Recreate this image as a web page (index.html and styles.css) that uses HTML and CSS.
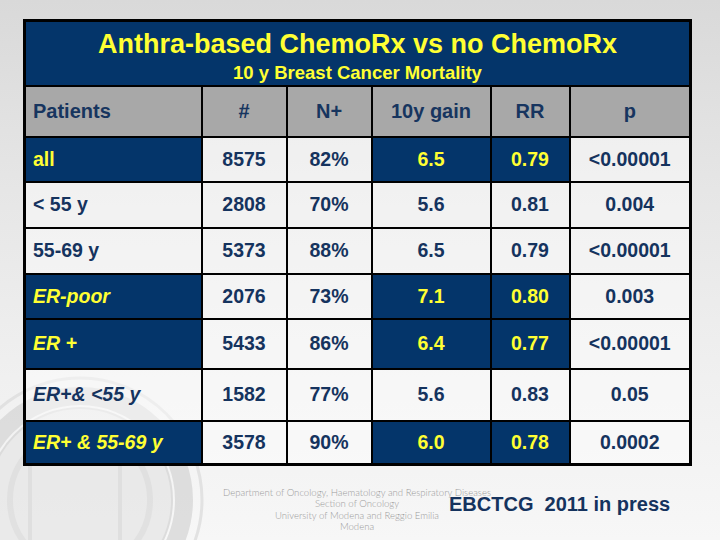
FILE: index.html
```html
<!DOCTYPE html>
<html>
<head>
<meta charset="utf-8">
<link rel="stylesheet" href="styles.css">
</head>
<body>
<div class="slide">
  <svg class="seal" width="260" height="260" viewBox="0 0 260 260" aria-hidden="true">
    <circle cx="130" cy="130" r="122" fill="none" stroke="#dcdcdc" stroke-width="3"/>
    <circle cx="130" cy="130" r="104" fill="none" stroke="#d6d6d6" stroke-width="18"/>
    <circle cx="130" cy="130" r="92" fill="#e6e6e6" stroke="#d4d4d4" stroke-width="2"/>
    <circle cx="130" cy="130" r="70" fill="none" stroke="#dadada" stroke-width="6"/>
    <rect x="80" y="70" width="90" height="110" fill="none" stroke="#d8d8d8" stroke-width="4"/>
  </svg>

  <table class="results">
    <colgroup>
      <col class="c-pat"><col class="c-n"><col class="c-np"><col class="c-gain"><col class="c-rr"><col class="c-p">
    </colgroup>
    <tr class="r-title">
      <td colspan="6" class="title-cell">
        <div class="title">Anthra-based ChemoRx vs no ChemoRx</div>
        <div class="subtitle">10 y Breast Cancer Mortality</div>
      </td>
    </tr>
    <tr class="r-head">
      <th class="lbl">Patients</th><th>#</th><th>N+</th><th>10y gain</th><th>RR</th><th>p</th>
    </tr>
    <tr class="r1">
      <td class="lbl hl">all</td><td>8575</td><td>82%</td><td class="hl">6.5</td><td class="hl">0.79</td><td>&lt;0.00001</td>
    </tr>
    <tr class="r2">
      <td class="lbl">&lt; 55 y</td><td>2808</td><td>70%</td><td>5.6</td><td>0.81</td><td>0.004</td>
    </tr>
    <tr class="r3">
      <td class="lbl">55-69 y</td><td>5373</td><td>88%</td><td>6.5</td><td>0.79</td><td>&lt;0.00001</td>
    </tr>
    <tr class="r4">
      <td class="lbl hl it">ER-poor</td><td>2076</td><td>73%</td><td class="hl">7.1</td><td class="hl">0.80</td><td>0.003</td>
    </tr>
    <tr class="r5">
      <td class="lbl hl it">ER +</td><td>5433</td><td>86%</td><td class="hl">6.4</td><td class="hl">0.77</td><td>&lt;0.00001</td>
    </tr>
    <tr class="r6">
      <td class="lbl it">ER+&amp; &lt;55 y</td><td>1582</td><td>77%</td><td>5.6</td><td>0.83</td><td>0.05</td>
    </tr>
    <tr class="r7">
      <td class="lbl hl it">ER+ &amp; 55-69 y</td><td>3578</td><td>90%</td><td class="hl">6.0</td><td class="hl">0.78</td><td>0.0002</td>
    </tr>
  </table>

  <div class="footer">
    <div class="dept">
      <div>Department of Oncology, Haematology and Respiratory Diseases</div>
      <div>Section of Oncology</div>
      <div>University of Modena and Reggio Emilia</div>
      <div>Modena</div>
    </div>
    <div class="source">EBCTCG&nbsp; 2011 in press</div>
  </div>
</div>
</body>
</html>
```

FILE: styles.css
```css
html, body {
  margin: 0;
  padding: 0;
}

body {
  width: 720px;
  height: 540px;
  overflow: hidden;
  font-family: "Liberation Sans", Arial, sans-serif;
}

.slide {
  position: relative;
  width: 720px;
  height: 540px;
  box-sizing: border-box;
  padding: 19px 0 0 23px;
  background: linear-gradient(to bottom, #d9d9d9 0%, #e6e6e6 35%, #f0f0f0 70%, #f7f7f7 100%);
  overflow: hidden;
}

.seal {
  position: absolute;
  left: -50px;
  top: 370px;
  opacity: 0.75;
}

.results {
  position: relative;
  width: 666px;
  table-layout: fixed;
  border-collapse: collapse;
  border: 3px solid #000;
  font-weight: bold;
  font-size: 19.5px;
  color: #15335e;
}

.c-pat { width: 177px; }
.c-n { width: 85px; }
.c-np { width: 85px; }
.c-gain { width: 119px; }
.c-rr { width: 79px; }
.c-p { width: 121px; }

.results td,
.results th {
  border: 2px solid #000;
  padding: 0;
  text-align: center;
  vertical-align: middle;
  background: rgba(255, 255, 255, 0.45);
  font-weight: bold;
}

.results .lbl {
  text-align: left;
  padding-left: 7px;
}

.results .it {
  font-style: italic;
}

.results .hl {
  background: #04356a;
  color: #ffff33;
}

.results .title-cell {
  background: #04356a;
  color: #ffff33;
  padding-top: 4px;
}

.title {
  font-size: 27px;
  line-height: 36px;
}

.subtitle {
  font-size: 18.5px;
  line-height: 22px;
}

.r-title { height: 65px; }

.r-head { height: 51px; }
.r-head th {
  background: #a8a8a8;
  color: #17355f;
  font-size: 20px;
}

.r1 { height: 45px; }
.r2 { height: 46px; }
.r3 { height: 46px; }
.r4 { height: 45px; }
.r5 { height: 50px; }
.r6 { height: 52px; }
.r7 { height: 44px; }

.footer {
  position: relative;
  width: 666px;
  margin-top: 21px;
}

.dept {
  width: 300px;
  margin-left: 184px;
  text-align: center;
  font-family: Lato, "Open Sans", sans-serif;
  font-weight: 300;
  font-size: 9.6px;
  line-height: 11.3px;
  color: #9c9c9c;
}

.source {
  position: absolute;
  left: 426px;
  top: 8px;
  font-size: 20px;
  line-height: 18px;
  font-weight: bold;
  color: #15335e;
  white-space: nowrap;
}
```
